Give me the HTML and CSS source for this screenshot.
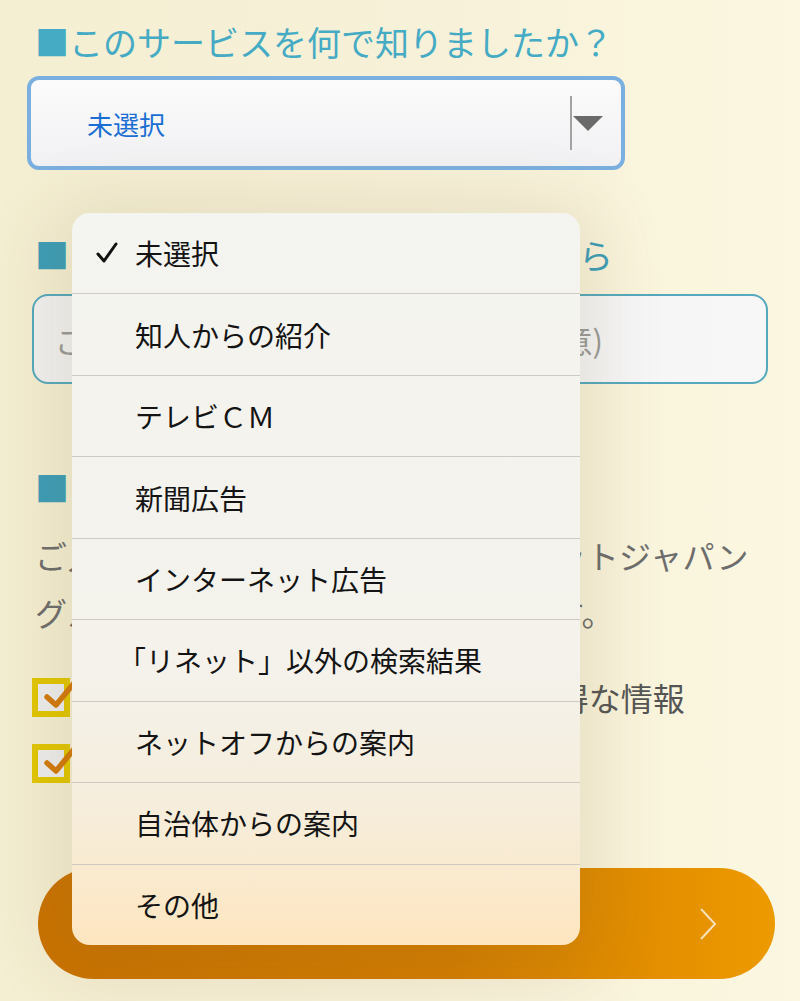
FILE: index.html
```html
<!DOCTYPE html>
<html lang="ja">
<head>
<meta charset="utf-8">
<title>アンケート</title>
<link rel="stylesheet" href="styles.css">
</head>
<body>
<main class="form">
  <h2 class="q">■このサービスを何で知りましたか？</h2>
  <div class="select">
    <span class="select-value">未選択</span>
    <span class="select-sep"></span>
    <svg class="select-arrow" width="30" height="15" viewBox="0 0 30 15"><polygon points="0,0 30,0 15,15" fill="#6a6a6a"/></svg>
  </div>

  <h2 class="q q2">■ご紹介者様がいらっしゃいましたら</h2>
  <div class="input"><span class="placeholder">ご紹介者様のお名前・媒体名など(任意)</span></div>

  <h2 class="q q3">■メールマガジンの配信について</h2>
  <p class="note">ご入力いただいた個人情報は、リネットジャパン<br>グループで大切にお預かりいたします。</p>

  <ul class="checks">
    <li class="check-row">
      <span class="checkbox"><svg class="tick" width="40" height="36" viewBox="0 0 40 36"><polyline points="9,21 18,29 37,6" fill="none" stroke="#d27a0c" stroke-width="5.5" stroke-linecap="round" stroke-linejoin="round"/></svg></span>
      <span class="check-label">キャンペーンなど、リネットのお得な情報</span>
    </li>
    <li class="check-row">
      <span class="checkbox"><svg class="tick" width="40" height="36" viewBox="0 0 40 36"><polyline points="9,21 18,29 37,6" fill="none" stroke="#d27a0c" stroke-width="5.5" stroke-linecap="round" stroke-linejoin="round"/></svg></span>
      <span class="check-label">プライバシーポリシーに同意する</span>
    </li>
  </ul>

  <button class="submit" type="button">
    <span class="submit-text">確認画面へ進む</span>
    <svg class="chevron" width="20" height="34" viewBox="0 0 20 34"><polyline points="3,2 17,17 3,32" fill="none" stroke="#f7e2bb" stroke-width="2"/></svg>
  </button>
</main>

<div class="menu">
  <div class="menu-item selected">
    <span class="menu-check"><svg width="22" height="22" viewBox="0 0 22 22"><polyline points="2,12 8,19 20,2" fill="none" stroke="#111" stroke-width="3" stroke-linecap="round" stroke-linejoin="round"/></svg></span>
    <span class="menu-text">未選択</span>
  </div>
  <div class="menu-item"><span class="menu-check"></span><span class="menu-text">知人からの紹介</span></div>
  <div class="menu-item"><span class="menu-check"></span><span class="menu-text">テレビＣＭ</span></div>
  <div class="menu-item"><span class="menu-check"></span><span class="menu-text">新聞広告</span></div>
  <div class="menu-item"><span class="menu-check"></span><span class="menu-text">インターネット広告</span></div>
  <div class="menu-item"><span class="menu-check"></span><span class="menu-text"><span class="halt">「</span>リネット」以外の検索結果</span></div>
  <div class="menu-item"><span class="menu-check"></span><span class="menu-text">ネットオフからの案内</span></div>
  <div class="menu-item"><span class="menu-check"></span><span class="menu-text">自治体からの案内</span></div>
  <div class="menu-item"><span class="menu-check"></span><span class="menu-text">その他</span></div>
</div>
</body>
</html>
```

FILE: styles.css
```css
html, body {
  margin: 0;
  padding: 0;
}

body {
  width: 800px;
  height: 1001px;
  overflow: hidden;
  position: relative;
  font-family: "Noto Sans CJK JP", "Noto Sans", sans-serif;
  background: linear-gradient(90deg, #f4eed2 0%, #f7f1d9 55%, #fcf7e0 100%);
}

.form {
  padding-top: 22px;
}

.q {
  margin: 0 0 0 35px;
  font-size: 34px;
  line-height: 40px;
  font-weight: normal;
  color: #45aac4;
  white-space: nowrap;
}

.q2, .q3 {
  color: #3c9db8;
}

.q2 {
  margin-top: 65px;
}

.q3 {
  margin-top: 84px;
}

.select {
  box-sizing: border-box;
  margin: 14px 0 0 27px;
  width: 598px;
  height: 94px;
  border: 4px solid #7aafe0;
  border-radius: 12px;
  background: linear-gradient(180deg, #fbfbfc 0%, #f1f1f3 100%);
  display: flex;
  align-items: center;
  padding-left: 56px;
}

.select-value {
  flex: 1;
  font-size: 26px;
  color: #1b6fd4;
}

.select-sep {
  width: 2px;
  height: 54px;
  background: #a3a3a3;
}

.select-arrow {
  margin: 0 18px 0 1px;
}

.input {
  box-sizing: border-box;
  margin: 19px 0 0 32px;
  width: 736px;
  height: 90px;
  border: 2.5px solid #55a8bd;
  border-radius: 16px;
  background: linear-gradient(90deg, #f1f1f1 0%, #f7f7f8 100%);
  display: flex;
  align-items: center;
  padding-left: 21px;
}

.placeholder {
  font-size: 31px;
  color: #9a9a9a;
  white-space: nowrap;
}

.note {
  margin: 19px 0 0 35px;
  font-size: 32px;
  letter-spacing: 0.45px;
  line-height: 57px;
  color: #6d6d6d;
  white-space: nowrap;
}

.checks {
  list-style: none;
  margin: 23px 0 0 0;
  padding: 0;
}

.check-row {
  height: 66px;
  display: flex;
  align-items: center;
}

.checkbox {
  position: relative;
  box-sizing: border-box;
  margin-left: 32px;
  width: 38px;
  height: 39px;
  border: 6px solid #e1c600;
  background: #ededee;
}

.tick {
  position: absolute;
  left: 0;
  top: -8px;
}

.check-label {
  margin-left: 10px;
  font-size: 32px;
  color: #555;
  white-space: nowrap;
}

.submit {
  margin: 72px 0 0 38px;
  width: 737px;
  height: 111px;
  border: none;
  border-radius: 56px;
  background: linear-gradient(90deg, #c97200 0%, #d27c00 55%, #ed9a00 100%);
  display: flex;
  align-items: center;
  justify-content: flex-end;
  padding: 0 57px 0 0;
  position: relative;
  font-family: inherit;
}

.submit-text {
  position: absolute;
  left: 0;
  right: 0;
  text-align: center;
  font-size: 30px;
  color: #fff;
}

.menu {
  position: absolute;
  left: 72px;
  top: 213px;
  width: 508px;
  height: 732px;
  border-radius: 18px;
  overflow: hidden;
  display: flex;
  flex-direction: column;
  background: linear-gradient(180deg, #f4f4f0 0%, #f4f2eb 62%, #f6eddb 82%, #fee6c0 100%);
  box-shadow: 0 10px 70px 18px rgba(120, 100, 40, 0.14);
}

.menu-item {
  flex: 1;
  display: flex;
  align-items: center;
  font-size: 28px;
  color: #141414;
}

.menu-item + .menu-item {
  border-top: 1px solid #cdcac2;
}

.menu-check {
  width: 39px;
  padding-left: 24px;
  display: flex;
  align-items: center;
}

.menu-text {
  white-space: nowrap;
}

.halt {
  font-feature-settings: "halt";
  margin-left: -3px;
}
```
